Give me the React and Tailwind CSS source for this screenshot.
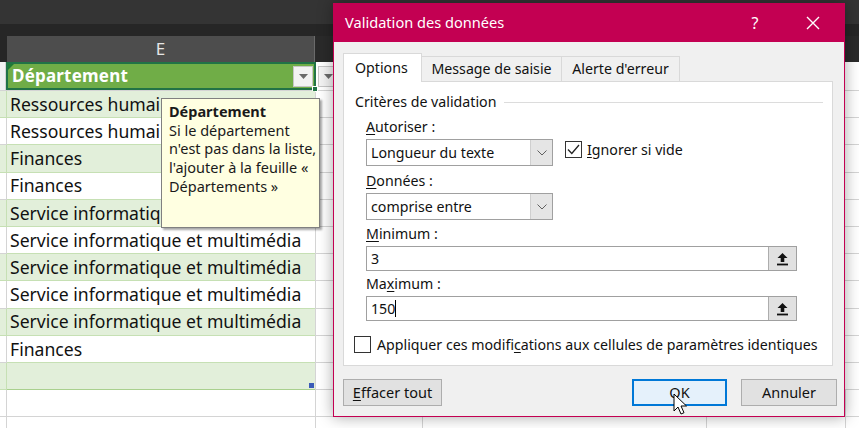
import React from 'react';

const rows = [
  { text: 'Ressources humaines', band: true },
  { text: 'Ressources humaines', band: false },
  { text: 'Finances', band: true },
  { text: 'Finances', band: false },
  { text: 'Service informatique et multimédia', band: true },
  { text: 'Service informatique et multimédia', band: false },
  { text: 'Service informatique et multimédia', band: true },
  { text: 'Service informatique et multimédia', band: false },
  { text: 'Service informatique et multimédia', band: true },
  { text: 'Finances', band: false },
  { text: '', band: true, last: true },
];

const FilterButton = ({ className = '' }) => (
  <div className={`flex items-center justify-center w-[20px] h-[21px] bg-[#f3f3f3] border border-[#c6c6c6] ${className}`}>
    <svg width="9" height="5" viewBox="0 0 9 5"><path d="M0 0h9L4.5 5z" fill="#6b6b6b" /></svg>
  </div>
);

const Chevron = () => (
  <div className="flex items-center justify-center w-[22px] h-full bg-[#e5e5e5] border-l border-[#cfcfcf]">
    <svg width="10" height="6" viewBox="0 0 10 6"><path d="M0.5 0.5L5 5l4.5-4.5" fill="none" stroke="#606060" strokeWidth="1" /></svg>
  </div>
);

const RangeButton = () => (
  <div className="flex items-center justify-center w-[28px] h-full bg-[#e1e1e1] border-l border-[#adadad]">
    <svg width="13" height="14" viewBox="0 0 13 14">
      <path d="M6.5 1L1.5 6h3.2v4h3.6V6h3.2z" fill="#111" />
      <rect x="1" y="11.6" width="11" height="1.8" fill="#111" />
    </svg>
  </div>
);

const Checkbox = ({ checked }) => (
  <div className="w-[17px] h-[17px] border border-[#333] bg-white flex items-center justify-center shrink-0">
    {checked && (
      <svg width="13" height="11" viewBox="0 0 13 11"><path d="M1 5.5l3.8 4L12 1" fill="none" stroke="#222" strokeWidth="1.3" /></svg>
    )}
  </div>
);

const Button = ({ children, primary, className = '' }) => (
  <div className={`flex items-center justify-center h-[27px] text-[14.5px] ${primary ? 'bg-[#e5f1fb] border-2 border-[#0078d7]' : 'bg-[#e1e1e1] border border-[#adadad]'} ${className}`}>
    {children}
  </div>
);

const Sheet = () => (
  <div className="flex flex-col" style={{ fontFamily: '"Noto Sans", sans-serif' }}>
    <div className="h-[24px] bg-[#343434]" />
    <div className="h-[12px] bg-[#262626]" />
    {/* column headers */}
    <div className="flex h-[26px] bg-[#2a2a2a]">
      <div className="w-[7px] bg-[#262626]" />
      <div className="w-[308px] bg-[#4d4d4d] border-r border-[#6a6a6a] flex items-center justify-center text-[17px] text-[#e6e6e6]">E</div>
      <div className="flex-1" />
    </div>
    {/* header row */}
    <div className="flex h-[29px] bg-white border-b border-[#d4d4d4]">
      <div className="w-[6px] bg-[#f2f2f2] border-r border-[#d4d4d4]" />
      <div className="relative w-[310px] bg-[#70ad47] border-2 border-[#217346] flex items-center pl-[4px]">
        <div className="absolute left-0 top-0 w-0 h-0 border-t-[6px] border-r-[6px] border-t-[#1e7a34] border-r-transparent" />
        <span className="text-[17px] font-bold text-white tracking-[0.2px]">Département</span>
        <FilterButton className="ml-auto mr-[1px]" />
        <div className="absolute -right-[4px] -bottom-[4px] w-[6px] h-[6px] bg-[#217346] border border-white" />
      </div>
      <div className="flex-1 flex items-center pl-[2px]">
        <FilterButton />
      </div>
    </div>
    {rows.map((r, i) => (
      <div key={i} className="flex h-[27.2px]">
        <div className={`w-[7px] border-b border-r ${r.band ? 'bg-[#e2efda] border-[#c6e0b4]' : 'bg-white border-[#d4d4d4]'}`} />
        <div className={`relative w-[308px] flex items-center pl-[3px] text-[17.6px] text-[#111] border-b whitespace-nowrap overflow-hidden ${r.band ? 'bg-[#e2efda]' : 'bg-white'} ${r.last ? 'border-[#a9d08e]' : 'border-[#c6e0b4]'}`}>
          {r.text}
          {r.last && <div className="absolute right-[1px] bottom-[1px] w-[5px] h-[5px] bg-[#3b5cb8]" />}
        </div>
        <div className="w-[108px] bg-white border-b border-l border-r border-[#d4d4d4]" />
        <div className="flex-1 bg-white border-b border-[#d4d4d4]" />
      </div>
    ))}
    {[0, 1].map((i) => (
      <div key={i} className="flex h-[27.2px]">
        <div className="w-[7px] bg-white border-b border-r border-[#d4d4d4]" />
        <div className="w-[308px] bg-white border-b border-[#d4d4d4]" />
        <div className="w-[108px] bg-white border-b border-l border-r border-[#d4d4d4]" />
        <div className="w-[284px] bg-white border-b border-r border-[#d4d4d4]" />
        <div className="w-[139px] bg-white border-b border-r border-[#d4d4d4]" />
        <div className="flex-1 bg-white border-b border-[#d4d4d4]" />
      </div>
    ))}
  </div>
);

const Tooltip = () => (
  <div className="absolute left-[161px] top-[98px] w-[159px] h-[130px] bg-[#ffffe1] border border-[#808080] shadow-[2px_2px_2px_rgba(0,0,0,0.35)] px-[7px] pt-[3px] text-[14.5px] leading-[18.7px] text-[#1a1a1a] whitespace-nowrap"
       style={{ fontFamily: '"Noto Sans", sans-serif' }}>
    <div className="font-bold">Département</div>
    <div>Si le département</div>
    <div>n'est pas dans la liste,</div>
    <div>l'ajouter à la feuille «</div>
    <div>Départements »</div>
  </div>
);

const Dialog = () => (
  <div className="absolute left-[333px] top-[3px] w-[512px] h-[414px] bg-[#f0f0f0] border border-[#c30052] shadow-[0_0_14px_rgba(0,0,0,0.35)] flex flex-col text-[#111]"
       style={{ fontFamily: '"Noto Sans", sans-serif' }}>
    {/* title bar */}
    <div className="h-[38px] bg-[#c30052] flex items-center pl-[11px] pr-[8px] text-white shrink-0">
      <span className="text-[14.6px] flex-1">Validation des données</span>
      <span className="w-[46px] text-center text-[16px]">?</span>
      <span className="w-[46px] ml-[12px] flex justify-center">
        <svg width="14" height="14" viewBox="0 0 14 14"><path d="M1 1l12 12M13 1L1 13" stroke="#fff" strokeWidth="1.4" /></svg>
      </span>
    </div>
    <div className="px-[9px] pt-[11px] flex flex-col">
      {/* tabs */}
      <div className="flex items-end h-[28px] text-[14.2px]">
        <div className="relative z-10 -mb-px w-[79px] h-[29px] bg-white border border-b-0 border-[#d9d9d9] flex items-center pl-[11px]">Options</div>
        <div className="w-[140px] h-[25px] border-t border-r border-[#d9d9d9] flex items-center justify-center">Message de saisie</div>
        <div className="w-[118px] h-[25px] border-t border-r border-[#d9d9d9] flex items-center justify-center">Alerte d'erreur</div>
      </div>
      {/* panel */}
      <div className="w-[490px] h-[285px] bg-white border border-[#d9d9d9] flex flex-col text-[14.2px]">
        <div className="h-[20px] mt-[10px] flex items-center pl-[11px] pr-[9px]">
          <span>Critères de validation</span>
          <div className="flex-1 h-px bg-[#dcdcdc] ml-[8px]" />
        </div>
        <div className="pl-[22px] flex flex-col">
          <div className="h-[20px] mt-[5px] flex items-center"><span><u className="underline-offset-2">A</u>utoriser :</span></div>
          <div className="flex items-center mt-[2px]">
            <div className="w-[187px] h-[27px] border border-[#a0a0a0] bg-white flex items-center">
              <span className="flex-1 pl-[4px]">Longueur du texte</span>
              <Chevron />
            </div>
            <div className="ml-[12px] -mt-[6px]"><Checkbox checked /></div>
            <span className="ml-[5px] -mt-[6px]"><u className="underline-offset-2">I</u>gnorer si vide</span>
          </div>
          <div className="h-[20px] mt-[5px] flex items-center"><span><u className="underline-offset-2">D</u>onnées :</span></div>
          <div className="w-[187px] h-[27px] mt-[2px] border border-[#a0a0a0] bg-white flex items-center">
            <span className="flex-1 pl-[4px]">comprise entre</span>
            <Chevron />
          </div>
          <div className="h-[20px] mt-[4px] flex items-center"><span><u className="underline-offset-2">M</u>inimum :</span></div>
          <div className="w-[431px] h-[25px] mt-[2px] border border-[#a0a0a0] bg-white flex items-center">
            <span className="flex-1 pl-[4px]">3</span>
            <RangeButton />
          </div>
          <div className="h-[20px] mt-[3px] flex items-center"><span>Ma<u className="underline-offset-2">x</u>imum :</span></div>
          <div className="w-[431px] h-[25px] mt-[2px] border border-[#a0a0a0] bg-white flex items-center">
            <span className="flex-1 pl-[4px] flex items-center">150<span className="inline-block w-px h-[17px] bg-black" /></span>
            <RangeButton />
          </div>
        </div>
        <div className="flex items-center mt-[13px] pl-[10px]">
          <Checkbox />
          <span className="ml-[6px]">Appliquer ces modifi<u className="underline-offset-2">c</u>ations aux cellules de paramètres identiques</span>
        </div>
      </div>
      {/* buttons */}
      <div className="flex mt-[13px]">
        <Button className="w-[99px]"><span><u className="underline-offset-2">E</u>ffacer tout</span></Button>
        <Button primary className="w-[95px] ml-auto">OK</Button>
        <Button className="w-[96px] ml-[14px] -mr-[2px]">Annuler</Button>
      </div>
    </div>
  </div>
);

const Cursor = () => (
  <svg className="absolute left-[673px] top-[393px]" width="14" height="22" viewBox="0 0 14 22">
    <path d="M1 1v17l4-4 3 7 3-1.3-3-6.7h5.5z" fill="#fff" stroke="#000" strokeWidth="1" strokeLinejoin="round" />
  </svg>
);

export default function App() {
  return (
    <div className="relative w-[859px] h-[428px] overflow-hidden bg-white">
      <Sheet />
      <Tooltip />
      <Dialog />
      <Cursor />
    </div>
  );
}
